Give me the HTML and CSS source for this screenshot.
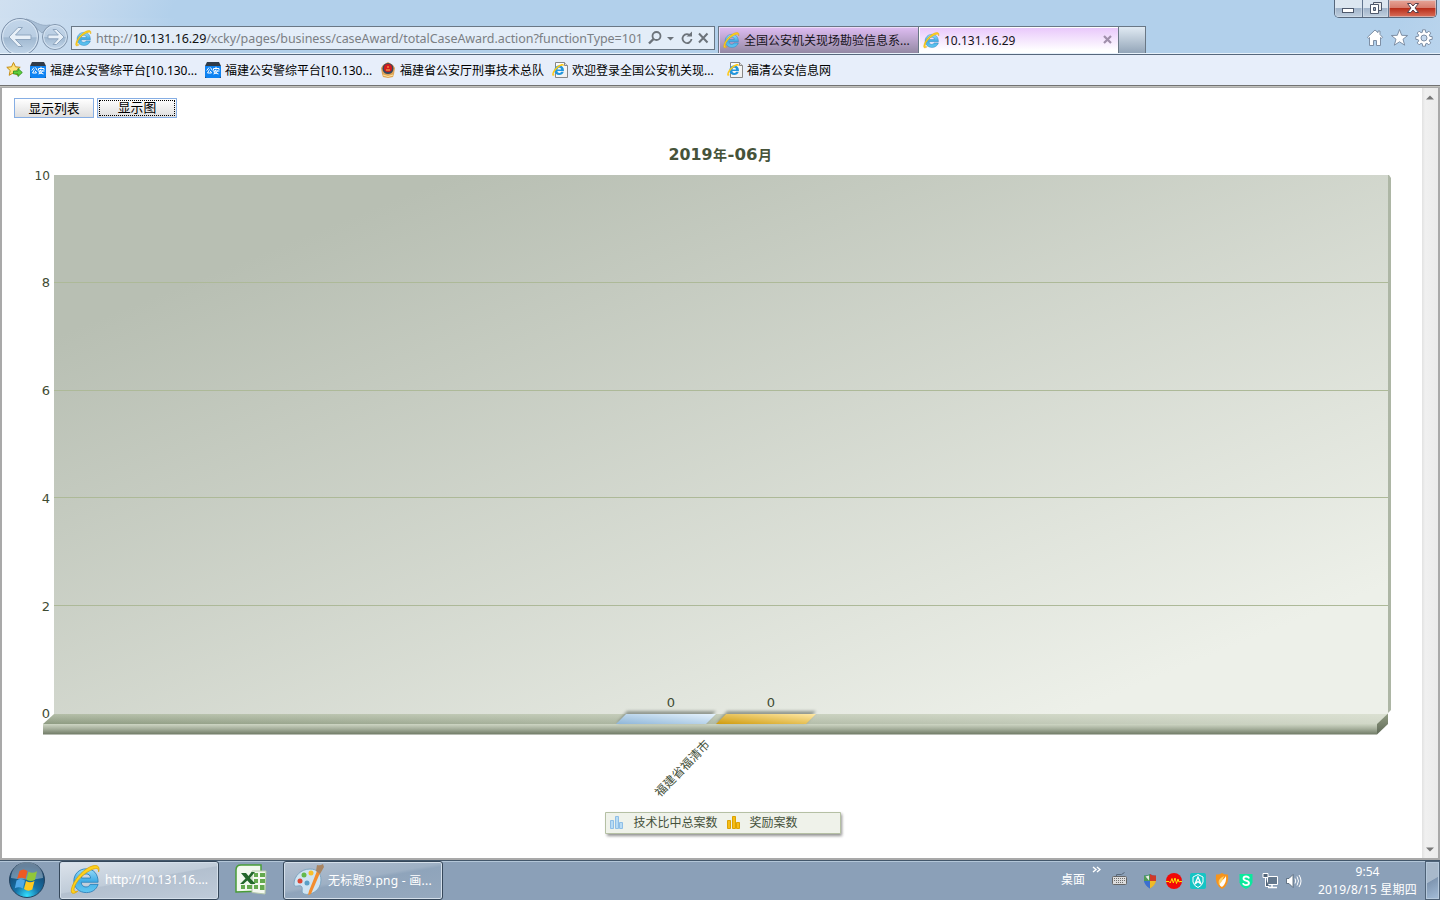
FILE: index.html
```html
<!DOCTYPE html>
<html lang="zh-CN">
<head>
<meta charset="utf-8">
<title>10.131.16.29</title>
<link rel="stylesheet" href="styles.css">
</head>
<body>
<svg class="defs" width="0" height="0">
  <defs>
    <linearGradient id="ieBlue" x1="0" y1="0" x2="0" y2="1"><stop offset="0" stop-color="#9adcf8"/><stop offset=".5" stop-color="#42aee6"/><stop offset="1" stop-color="#62c8f2"/></linearGradient>
    <linearGradient id="page" x1="0" y1="0" x2="1" y2="1"><stop offset="0" stop-color="#fff"/><stop offset="1" stop-color="#eee"/></linearGradient>
    <linearGradient id="navFill" x1="0" y1="0" x2="0" y2="1"><stop offset="0" stop-color="#c3d6ea"/><stop offset=".5" stop-color="#b9cde2"/><stop offset=".52" stop-color="#a0b8d0"/><stop offset="1" stop-color="#c4d8ec"/></linearGradient>
  </defs>
  <symbol id="ie" viewBox="0 0 32 32">
    <path d="M29 20.500c-1.800 5.500-6.300 8.500-12 8.500C9.500 29 4 24 4 17S9.300 4.500 16.500 4.500C24.500 4.500 29 9.500 29 18.300H11.500c.3 3 2 4.900 5 4.900 2.200 0 3.500-.9 4.300-2.700zM11.700 14h9.600c-.3-2.800-2-4.300-4.600-4.300s-4.500 1.500-5 4.300z" fill="url(#ieBlue)" stroke="#2b7fb9" stroke-width=".9"/>
    <path d="M8 27.500c-4.300 3.600-7.500 3-6.500-2C2.800 17.500 12 6.500 20.500 2.500 27-.4 31.500 1 29.500 7.500c.3-4.200-3-4.200-8-1.700C13.500 9.800 6 17.500 4.300 24.500c-.6 2.700.7 4.200 3.700 3z" fill="#ffd21c" stroke="#dda300" stroke-width=".8"/>
  </symbol>
  <symbol id="iepage" viewBox="0 0 16 16">
    <path d="M3.500.5h9l3 3v12h-12z" fill="url(#page)" stroke="#878787"/><path d="M12.500.5v3h3" fill="#ddd" stroke="#878787"/>
    <path d="M11.800 9.800c-.8 2.200-2.400 3.300-4.500 3.300-2.900 0-4.900-1.800-4.900-4.600s2-4.900 4.900-4.900c3 0 4.700 2 4.700 5.400H5.400c.1 1.300.8 2 2 2 .8 0 1.400-.4 1.700-1.200zM5.400 7.500h3.700C9 6.400 8.300 5.800 7.300 5.800s-1.700.6-1.900 1.700z" fill="#2396dc"/>
    <path d="M3 12.800C1 14.600-.3 14 .4 11.300 1.200 8 5 3.700 8.500 2.400c2.300-.8 3.700-.1 3.200 1.700-.4-.9-1.500-.7-2.800 0C6 5.500 3.200 8.500 2 11c-.5 1.200-.2 2 1 1.800z" fill="#ffc917"/>
  </symbol>
  <symbol id="police" viewBox="0 0 16 16">
    <path d="M2 0h12l2 4v12H0V4z" fill="#303b48"/><path d="M0 4h16v10a2 2 0 0 1-2 2H2a2 2 0 0 1-2-2z" fill="#0d82f2"/>
    <path d="M4 5.500 1.700 8.500M5.500 5.500 7.300 8.500M4.500 7.500l-2 3.500h4L5.300 9M11 4.800v1.700M8.500 8V6.500h5.500V8M8 9h6.500M11 7.500 9.200 10.500l4.300 1.500M12.700 8.500 11 11l-2.500 1" fill="none" stroke="#fff" stroke-width="1"/>
  </symbol>
</svg>

<header class="chrome">
  <div class="titlebar">
    <div class="winbtns">
      <span class="wb min"><svg width="14" height="8"><rect x="1.500" y="1.500" width="11" height="4" fill="#fff" stroke="#4e586b"/></svg></span>
      <span class="wb max"><svg width="14" height="14"><path d="M4.500 1.500h8v8h-8z" fill="#eee" stroke="#4e586b"/><path d="M1.500 3.500h8v9h-8z" fill="#fff" stroke="#4e586b"/><path d="M4.500 6.500h2v3h-2z" fill="#9aabc0" stroke="#4e586b"/></svg></span>
      <span class="wb close"><svg width="14" height="12"><path d="M1.500 1.500h3.300L7 4l2.200-2.500h3.300L9 6l3.500 4.500H9.200L7 8l-2.200 2.500H1.500L5 6z" fill="#fff" stroke="#54404d"/></svg></span>
    </div>
  </div>
  <div class="navrow">
    <svg class="nav" width="71" height="36" viewBox="0 0 71 36">
      <path d="M26 2c10 2 13 8 24 6l-8 8z" fill="#a9bfd6" stroke="#98aec6"/>
      <circle cx="20" cy="20" r="18.500" fill="url(#navFill)" stroke="#7d91aa"/><circle cx="20" cy="20" r="17.300" fill="none" stroke="#dae7f4"/>
      <circle cx="55" cy="20" r="12.500" fill="url(#navFill)" stroke="#8195ac"/><circle cx="55" cy="20" r="11.400" fill="none" stroke="#d6e4f2"/>
      <path d="M9 20 18 10.500h4.500L15.500 18H31v4.500H15.500l7 7H18z" fill="#e8f0f8" stroke="#8fa6bf"/>
      <path d="m64 20-7.500-7.500h-3.500l5.300 5.500H48v3.800h10.300L53 27.500h3.500z" fill="#e8f0f8" stroke="#8fa6bf"/>
    </svg>
    <div class="address">
      <svg class="i16" width="17" height="17"><use href="#ie"/></svg>
      <span class="url">http://<b>10.131.16.29</b>/xcky/pages/business/caseAward/totalCaseAward.action?functionType=101</span>
      <svg class="tools" width="64" height="18" fill="none" stroke="#6c737a" stroke-width="1.800">
        <circle cx="8.500" cy="7" r="4"/><path d="M5.500 10 1 14.500" stroke-width="2.400"/>
        <path d="M19 8h7l-3.500 3.500z" fill="#6c737a" stroke="none"/>
        <path d="M42.500 6.700A4.500 4.500 0 1 0 43.500 10"/><path d="M38.500 7.500h5.500v-5z" fill="#6c737a" stroke="none"/>
        <path d="m51 4.500 8.500 9M59.500 4.500 51 13.500" stroke-width="2"/>
      </svg>
    </div>
    <div class="tab tab1"><svg class="i16" width="17" height="17"><use href="#ie"/></svg><span class="t1">全国公安机关现场勘验信息系...</span></div>
    <div class="tab tab2"><svg class="i16" width="17" height="17"><use href="#ie"/></svg><span class="t2">10.131.16.29</span>
      <svg class="tx" width="10" height="10"><path d="m1 1 7 7M8 1 1 8" stroke="#a08fab" stroke-width="2.200"/></svg></div>
    <div class="newtab"></div>
    <svg class="cmds" width="68" height="20" viewBox="0 0 68 20" fill="#fff" stroke="#7e8fa5" stroke-width="1">
      <path d="m9 2 3 2.600V3h2v3.500l2.500 2.700-1 1.200-1-.9V17.500h-4v-5h-3v5h-4V9.500l-1 .9-1-1.200z"/>
      <path d="m33.500 1.500 2.200 5.800 6 .2-4.700 3.700 1.700 6-5.200-3.400-5.200 3.400 1.700-6-4.700-3.700 6-.2z"/>
      <path d="m56.300 4.300.3-2.500h2.800l.3 2.500 1.200.4 2-1.500 1.900 1.900-1.500 2 .5 1.200 2.400.3v2.800l-2.500.3-.4 1.200 1.500 2-1.900 1.900-2-1.500-1.200.5-.3 2.400h-2.800l-.3-2.500-1.200-.4-2 1.500-1.900-1.900 1.500-2-.5-1.200-2.400-.3V8.600l2.500-.3.400-1.200-1.500-2 1.900-1.900 2 1.500z"/><circle cx="58" cy="10" r="3" fill="#c5d9ee"/>
    </svg>
  </div>
  <div class="favs">
    <svg class="addfav" width="17" height="17"><path d="m7.500 1.500 2 4.300 4.700.5-3.500 3.200 1 4.800-4.200-2.500-4.300 2.500 1-4.800L.8 6.300l4.700-.5z" fill="#ffe37a" stroke="#c58c12"/><path d="M7.500 10h4.500V7.500l4.300 4-4.300 4V13H7.500z" fill="#61cf3d" stroke="#278b1b" stroke-width=".8"/></svg>
    <span class="fav f1"><svg width="16" height="16"><use href="#police"/></svg><span class="ft">福建公安警综平台[10.130...</span></span>
    <span class="fav f2"><svg width="16" height="16"><use href="#police"/></svg><span class="ft">福建公安警综平台[10.130...</span></span>
    <span class="fav f3"><svg width="16" height="16"><path d="M1 6 3 3l5-3 5 3 2 3-1 6-1 3-5 1-5-1-1-3z" fill="#dfa456"/><circle cx="8" cy="6.500" r="5.500" fill="#39465e"/><circle cx="8" cy="6" r="4" fill="#d51b1b"/><path d="M6 8h4M8 4v2" stroke="#fac14b"/><path d="M3 13q5 3 10 0" stroke="#ffe49b" fill="none"/></svg><span class="ft">福建省公安厅刑事技术总队</span></span>
    <span class="fav f4"><svg width="16" height="16"><use href="#iepage"/></svg><span class="ft">欢迎登录全国公安机关现...</span></span>
    <span class="fav f5"><svg width="16" height="16"><use href="#iepage"/></svg><span class="ft">福清公安信息网</span></span>
  </div>
</header>

<main class="view">
  <div class="doc">
    <div class="buttons"><button class="btn">显示列表</button><button class="btn focus"><span>显示图</span></button></div>
    <svg class="chart" width="1420" height="738" viewBox="2 120 1420 738">
      <defs>
        <linearGradient id="wall" x1="0" y1="0" x2="1" y2="1"><stop offset=".15" stop-color="#b8bfb3"/><stop offset=".88" stop-color="#edf0e9"/></linearGradient>
        <linearGradient id="floorTop" x1="0" y1="0" x2="0" y2="1"><stop offset="0" stop-color="#b4bea8"/><stop offset="1" stop-color="#8e9b82"/></linearGradient>
        <linearGradient id="floorTint" x1="0" y1="0" x2="1" y2="0"><stop offset="0" stop-color="#e8ece0" stop-opacity="0"/><stop offset="1" stop-color="#e8ece0" stop-opacity=".75"/></linearGradient>
        <linearGradient id="floorFront" x1="0" y1="0" x2="0" y2="1"><stop offset="0" stop-color="#ced6c4"/><stop offset=".45" stop-color="#a7b09d"/><stop offset="1" stop-color="#6f7a65"/></linearGradient>
        <linearGradient id="floorSide" x1="0" y1="0" x2="0" y2="1"><stop offset="0" stop-color="#929d83"/><stop offset="1" stop-color="#5f6957"/></linearGradient>
        <linearGradient id="blue" x1="0" y1="1" x2="1" y2="0"><stop offset="0" stop-color="#8fb6d8"/><stop offset="1" stop-color="#e6f3fd"/></linearGradient>
        <linearGradient id="gold" x1="0" y1="1" x2="1" y2="0"><stop offset="0" stop-color="#cf9b0d"/><stop offset="1" stop-color="#ffe9a7"/></linearGradient>
        <filter id="soft" x="-10%" y="-60%" width="120%" height="220%"><feGaussianBlur stdDeviation="1.700"/></filter>
      </defs>
      <path d="M1388 175h1l2 3v532l-3 3z" fill="#adb6a5"/>
      <path d="M54 175h1334v539H54z" fill="url(#wall)"/>
      <path d="M54 282.500h1334M54 390.500h1334M54 497.500h1334M54 605.500h1334" stroke="#adb998"/>
      <path d="M54 714h1334l-10 10H43z" fill="url(#floorTop)"/><path d="M54 714h1334l-10 10H43z" fill="url(#floorTint)"/>
      <path d="M43 724h1334v10.500H43z" fill="url(#floorFront)"/>
      <path d="m1377 724 11-10.500v10.500l-11 10.500z" fill="url(#floorSide)"/>
      <path d="M627 711h89l-10 12h-89zM727 711h89l-10 12h-89z" fill="#687066" opacity=".65" filter="url(#soft)"/>
      <path d="M626 714h90l-10 10h-90z" fill="url(#blue)"/><path d="M726 714h90l-10 10h-90z" fill="url(#gold)"/>
      <g class="axis">
        <text x="50" y="180" text-anchor="end" textLength="15.500" lengthAdjust="spacingAndGlyphs">10</text><text x="50" y="287" text-anchor="end">8</text><text x="50" y="395" text-anchor="end">6</text><text x="50" y="503" text-anchor="end">4</text><text x="50" y="611" text-anchor="end">2</text><text x="50" y="718" text-anchor="end">0</text>
        <text x="671" y="707" text-anchor="middle">0</text><text x="771" y="707" text-anchor="middle">0</text>
      </g>
      <text class="heading" y="160"><tspan x="668.500" textLength="44" lengthAdjust="spacingAndGlyphs">2019</tspan><tspan class="han" x="713">年</tspan><tspan x="727.500" textLength="30" lengthAdjust="spacingAndGlyphs">-06</tspan><tspan class="han" x="758">月</tspan></text>
      <text class="lab" transform="translate(660 797.500) rotate(-46)" textLength="73">福建省福清市</text>
      <path d="M607 814h235v22H607z" fill="#777" opacity=".8" filter="url(#soft)"/>
      <path d="M605.500 812.500h235v21h-235z" fill="#eff2ea" stroke="#b5c0a4"/>
      <g fill="#b8dcf5" stroke="#8fbee6"><path d="M610.500 820.500h3v8h-3zM615.500 816.500h3v12h-3zM619.500 822.500h3v6h-3z"/></g>
      <g fill="#f6bd16" stroke="#dba203"><path d="M727.500 820.500h3v8h-3zM732.500 816.500h3v12h-3zM736.500 822.500h3v6h-3z"/></g>
      <text class="lab" x="633.500" y="827" textLength="84">技术比中总案数</text><text class="lab" x="749.500" y="827" textLength="48">奖励案数</text>
    </svg>
  </div>
  <div class="scroll"><svg width="9" height="5"><path d="M0 4.500h8L4 .5z" fill="#777"/></svg><svg width="9" height="5"><path d="M0 .5h8l-4 4z" fill="#777"/></svg></div>
</main>

<footer class="taskbar">
  <svg class="start" width="38" height="38" viewBox="0 0 38 38">
    <defs><radialGradient id="orb" cx=".5" cy=".95" r=".85"><stop offset="0" stop-color="#32e0ff"/><stop offset=".4" stop-color="#1673a8"/><stop offset="1" stop-color="#163f67"/></radialGradient></defs>
    <circle cx="19" cy="19" r="17.500" fill="url(#orb)" stroke="#24435f"/><path d="M3 17a16 16 0 0 1 32 0q-16 3-32 0z" fill="#fff" opacity=".35"/>
    <path d="M11.500 10q4-3 8 0l-2 8q-4-2.500-8.500 0z" fill="#ed5a23"/><path d="M20.500 10.700q4 2.500 8.500-.5l-2 8.500q-4 2.500-8.500 0z" fill="#91c739"/><path d="M8.500 19.500q4-3 8.500 0l-2.200 8q-4-2.500-8-.2z" fill="#50a9e8"/><path d="M18 20q4 2.500 8.500 0l-2.200 8.500q-4 2.500-8.300-.4z" fill="#ffc91f"/>
  </svg>
  <div class="task active"><svg width="31" height="32"><use href="#ie"/></svg><span class="k1">http://10.131.16....</span></div>
  <svg class="excel" width="32" height="32" viewBox="0 0 32 32">
    <path d="M6 1h20v26L1 28V6q0-5 5-5z" fill="#f2f9ee" stroke="#4a9d38" stroke-width="1.500"/><path d="M17 7h14l-1 23-13-1.500z" fill="#f3f8ef" stroke="#b6c9ac"/>
    <path d="M19 9h4v4h-4zM25 9h5v4h-5zM19 15h4v4h-4zM25 15h5v4h-5zM19 21h4v4h-4zM25 21h4.500v5H25zM12 21h5v4h-5zM6 21h4v4H6z" fill="#64a94e"/><path d="M6 9h5l2.500 3 3-4h3.500l-5 6 5.500 6h-5l-3.200-3.500L8.500 20H5l5.500-5.500z" fill="#22672a"/>
  </svg>
  <div class="task paint"><svg width="33" height="32" viewBox="0 0 33 32">
    <path d="M17 5C8 5 1 12 1 20c0 4 5 1 7 2 3 2-1 6 3 8 6 2 17-3 17-14C28 9 24 5 17 5z" fill="#cfe4f2" stroke="#7fa5c0"/><circle cx="7" cy="17" r="2.500" fill="#dd4934"/><circle cx="11" cy="11" r="2.500" fill="#64b94b"/><circle cx="18" cy="9" r="2.500" fill="#f7bf2a"/><circle cx="14" cy="19" r="2.500" fill="#5aa0c6"/>
    <path d="m27 9-9 21-3 1 1-4L24 7z" fill="#f28d2e"/><path d="m23 7 1-6q3 1 6-1l1 3-4 7z" fill="#a98562"/></svg><span class="k2">无标题9.png - 画...</span></div>
  <div class="tray">
    <span class="desk">桌面</span><svg class="chev" width="9" height="8"><path d="m1 1 3 2.500L1 6M5 1l3 2.500L5 6" fill="none" stroke="#fff" stroke-width="1.400"/></svg>
    <svg class="kbd" width="16" height="15"><path d="M4.500 4V2.500h5l3-2" fill="none" stroke="#58687a"/><rect x=".5" y="4.500" width="14" height="8" rx="1" fill="#ddd" stroke="#666"/><path d="M2 6.500h12M2 8.500h12M4 10.500h8" stroke="#6e6e6e" stroke-dasharray="1 1"/></svg>
    <svg class="ic" width="16" height="16"><path d="M8 1q3 2 6 1.500Q15 11 8 15.500 1 11 2 2.500 5 3 8 1z" fill="#3576c8"/><path d="M8 1v7H2V2.500Q5 3 8 1z" fill="#4f9b54"/><path d="M8 1q3 2 6 1.500V8H8z" fill="#d03928"/><path d="M2 8h6v7.500Q3 13 2 8z" fill="#3b6fd0"/><path d="M8 8h6q-1 5-6 7.500z" fill="#efba28"/><path d="M3.500 3.500 7 2.500v5z" fill="#e8ece8"/></svg>
    <svg class="ic" width="16" height="16"><circle cx="8" cy="8" r="8" fill="#f20707"/><path d="M0 8.500h3l1.200 1.500L6 5.500 7.300 10 9 5l1.500 5.500L12 6l1 3 1-.5h2" fill="none" stroke="#ffe600"/></svg>
    <svg class="ic" width="16" height="16"><rect width="16" height="16" rx="2" fill="#15c4c4"/><path d="M8 1.500 13 4v5q-1 4-5 5.500Q4 13 3 9V4z" fill="none" stroke="#fff"/><path d="M5 11 8 4l3 7-3-2.500z" fill="none" stroke="#fff" stroke-width="1.300"/></svg>
    <svg class="ic" width="16" height="16"><path d="M8 0q3 2 6 1.500Q15.500 12 8 16 .5 12 2 1.500 5 2 8 0z" fill="#f7941c"/><path d="M12 3q1 7-4 11-4-2-2-6 4-1 6-5z" fill="#fff"/><path d="M5 12q-2-6 5-9-1 5-5 9z" fill="#ffd36b"/></svg>
    <svg class="ic" width="16" height="16"><path d="M1.500 1h13v8.500Q13 14 8 16 3 14 1.500 9.500z" fill="#0be89d"/><path d="M11 5.500Q10.500 3.500 8 3.500 5.500 3.500 5.500 5.500 5.500 7 8 7.700q3 .7 3 2.400 0 2-3 2-2.500 0-3-2" fill="none" stroke="#fff" stroke-width="1.800"/></svg>
    <svg class="ic" width="16" height="16"><path d="M5.500 3.500h10v8h-10z" fill="#64788d" stroke="#fff"/><path d="M10 12v2m-4 .5h9" stroke="#fff" stroke-width="1.500"/><path d="M1 .5h5v4H1zM3.500 4.500v9H7" fill="#526579" stroke="#fff"/></svg>
    <svg class="ic" width="16" height="16"><path d="M.5 5.500H3L7 1.500v13L3 10.500H.5z" fill="#fff" stroke="#4b5d70" stroke-width=".8"/><path d="M9 5.500q1.500 2.500 0 5M11 3.500q3 4.500 0 9M13 2q4 6 0 12" fill="none" stroke="#fff"/></svg>
    <div class="clock"><span>9:54</span><span class="date">2019/8/15 星期四</span></div>
  </div>
  <div class="peek"></div>
</footer>
</body>
</html>
```
FILE: styles.css
```css
* { box-sizing: border-box; }
body { margin: 0; width: 1440px; height: 900px; overflow: hidden; display: flex; flex-direction: column; font-family: "Noto Sans", "Noto Sans CJK SC", sans-serif; font-size: 12px; white-space: nowrap; }
svg { display: block; flex: none; }
.defs { position: absolute; }
.chrome { height: 88px; background: #b2d0eb; }
.titlebar { height: 18px; display: flex; justify-content: flex-end; padding-right: 3px; }
.chrome > .titlebar, .chrome > .navrow { background-image: linear-gradient(115deg, #d0e0f0 0, #c4d9ee 80px, #b2d0eb 160px, #b2d0eb 1270px, #c6dbf0 1400px); }
.winbtns { display: flex; width: 103px; height: 18px; border: 1px solid #56677c; border-top: 0; border-radius: 0 0 5px 5px; overflow: hidden; }
.wb { display: flex; align-items: center; justify-content: center; height: 17px; background: linear-gradient(#dce6f0 0 48%, #a1b4ca 50%, #c0cfdf); border-right: 1px solid #62758e; box-shadow: inset 0 0 0 1px #dce6f080; }
.min { width: 28px; padding-top: 4px; }
.max { width: 27px; padding-bottom: 2px; }
.close { width: 47px; border: 0; padding-bottom: 1px; background: linear-gradient(#e7a598 0, #d67a6b 48%, #b92e1b 50%, #d9705b); }
.navrow { height: 37px; display: flex; align-items: flex-end; border-bottom: 1px solid #56677c; box-shadow: inset 0 -1px #e8f2fb; padding-bottom: 1px; }
.address { width: 644px; height: 24px; margin: 0 3px 3px 0; border: 1px solid #697785; background: #e3edf8; display: flex; align-items: center; padding: 0 2px 0 3px; }
.url { margin-left: 4px; color: #7b7f84; font-size: 12.500px; letter-spacing: -.065px; width: 552px; flex: none; }
.url b { font-weight: 400; color: #111; }
.tab { height: 27px; display: flex; align-items: center; border: 1px solid #697785; border-bottom: 0; padding-left: 4px; }
.tab1 { width: 201px; background: linear-gradient(#dfbdf3, #9489a4); box-shadow: inset 1px 1px #eddcf8; }
.tab2 { width: 200px; border-left: 0; background: linear-gradient(#e8c6fb, #fff 90%); box-shadow: inset 1px 1px #fff; }
.t1, .t2 { margin-left: 4px; color: #16131a; }
.tx { margin: 0 5px 0 auto; }
.newtab { width: 27px; height: 27px; border: 1px solid #697785; border-left: 0; border-bottom: 0; background: linear-gradient(#e0eaf3, #93a5b8); }
.cmds { margin: 0 6px 5px auto; }
.favs { height: 33px; background: #e7eefa; border-bottom: 1px solid #aaa; box-shadow: inset 0 -1px #c2c2bd, inset 0 -2px #727272; display: grid; grid-template-columns: 24px 175px 175px 172px 175px auto; align-items: center; padding: 0 0 3px 6px; color: #000; }
.fav { display: flex; align-items: center; gap: 4px; }
.view { height: 772px; display: flex; background: #fff; border: solid #a9a9a9; border-width: 0 2px 2px; }
.doc { width: 1420px; height: 770px; }
.buttons { height: 32px; padding: 10px 0 0 12px; display: flex; gap: 3px; }
.btn { width: 80px; height: 20px; padding: 0; border: 1px solid #86aee4; background: linear-gradient(#fff, #dedede); font: 12.800px/18px "Noto Sans CJK SC", sans-serif; color: #000; }
.focus { padding: 1px; }
.focus span { display: block; height: 16px; line-height: 12px; border: 1px dotted #000; }
.axis { font: 13px "DejaVu Sans", sans-serif; fill: #3f4b33; }
.heading { font: 700 15px "DejaVu Sans", "Noto Sans CJK SC", sans-serif; fill: #46533a; }
.han { font: 700 14px "Noto Sans CJK SC", sans-serif; }
.lab { font: 12px "Noto Sans CJK SC", sans-serif; fill: #45513a; }
.scroll { width: 16px; background: linear-gradient(90deg, #e2e2e2, #f0f0f0 20%, #ebebeb); display: flex; flex-direction: column; align-items: center; justify-content: space-between; padding: 7px 0 6px; }
.taskbar { height: 40px; background: #8ba0b8; border-top: 1px solid #43576b; box-shadow: inset 0 1px #b3c6d8; display: flex; color: #fff; }
.start { margin: 0 0 0 8px; }
.task { height: 39px; border: 1px solid #35475a; border-radius: 3px; display: flex; align-items: center; padding-bottom: 2px; box-shadow: inset 0 0 0 1px #d4dfea; }
.active { width: 160px; margin-left: 13px; padding-left: 10px; background: linear-gradient(170deg, #dce3eb 0, #c0ccd9 48%, #b3c0cf 50%, #bfcbd9); }
.k1 { margin-left: 4px; }
.excel { margin: 3px 0 0 16px; }
.paint { width: 160px; margin-left: 16px; padding-left: 9px; background: linear-gradient(170deg, #b3c0d0 0, #9eb0c4 45%, #8fa4bb 50%, #96a9be); }
.k2 { margin-left: 2px; letter-spacing: .27px; }
.tray { display: flex; align-items: center; margin-left: auto; height: 39px; }
.chev { margin: 0 11px 21px 7px; }
.desk { margin-bottom: 3px; }
.kbd { margin: 0 14px 2px 0; }
.ic { margin-right: 8px; }
.clock { width: 115px; height: 39px; display: flex; flex-direction: column; align-items: center; line-height: 18px; padding-top: 2px; }
.date { letter-spacing: .22px; }
.peek { width: 15px; height: 39px; border: 1px solid #4e6277; box-shadow: inset 0 0 0 1px #b6c9dc; background: linear-gradient(150deg, #a8b9cb 0 48%, #7f96b1 50%, #a5bed9); }
```
